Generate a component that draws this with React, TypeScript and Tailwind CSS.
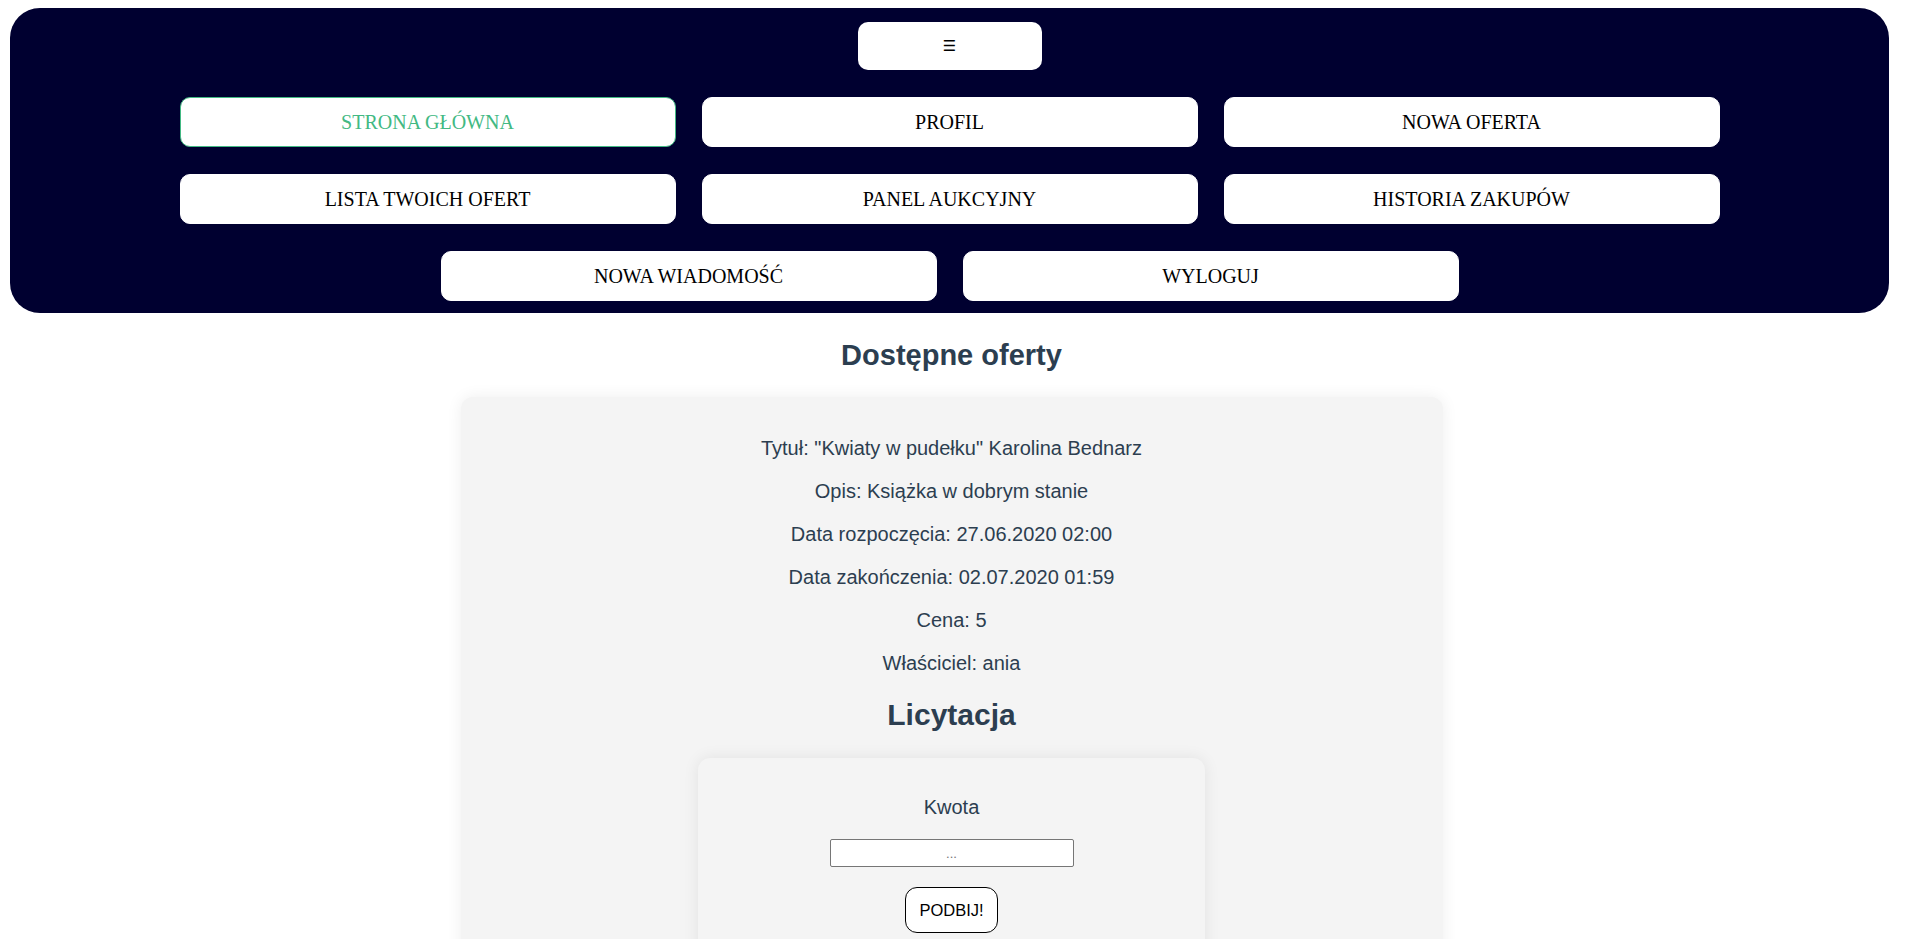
import React, { useState } from 'react';

const navLinks = [
  'STRONA GŁÓWNA',
  'PROFIL',
  'NOWA OFERTA',
  'LISTA TWOICH OFERT',
  'PANEL AUKCYJNY',
  'HISTORIA ZAKUPÓW',
  'NOWA WIADOMOŚĆ',
  'WYLOGUJ',
];

const offer = {
  title: '"Kwiaty w pudełku" Karolina Bednarz',
  description: 'Książka w dobrym stanie',
  start: '27.06.2020 02:00',
  end: '02.07.2020 01:59',
  price: 5,
  owner: 'ania',
};

const App = () => {
  const [active] = useState('STRONA GŁÓWNA');
  const [amount, setAmount] = useState('');

  return (
    <div className="w-[1903px] min-h-screen bg-white text-center text-[#2c3e50] font-['Liberation_Sans',Arial,sans-serif]">
      <nav className="ml-[10px] mr-[14px] mt-[8px] rounded-[30px] bg-[#000030] pt-[14px] pb-[12px] flex flex-col items-center">
        <button className="w-[184px] h-[48px] rounded-[10px] bg-white text-[15px] text-black font-['DejaVu_Sans',sans-serif] mb-[27px]">
          ☰
        </button>
        <div className="flex flex-wrap justify-center gap-x-[26px] gap-y-[27px] w-[1540px]">
          {navLinks.map((link) => (
            <a
              key={link}
              href="#"
              className={
                link === active
                  ? "w-[496px] h-[50px] rounded-[10px] bg-white border border-[#42b983] text-[#42b983] flex items-center justify-center text-[20px] font-['Liberation_Serif',serif]"
                  : "w-[496px] h-[50px] rounded-[10px] bg-white border border-white text-black flex items-center justify-center text-[20px] font-['Liberation_Serif',serif]"
              }
            >
              {link}
            </a>
          ))}
        </div>
      </nav>

      <h1 className="mt-[25px] text-[29px] leading-[34px] font-bold">Dostępne oferty</h1>

      <div className="mx-auto mt-[25px] mb-[40px] w-[982px] rounded-[12px] bg-[#f4f4f4] shadow-[0_0_16px_rgba(0,0,0,0.07)] pt-[40px] pb-[38px] flex flex-col items-center">
        <div className="flex flex-col gap-[20px] text-[20px] leading-[23px]">
          <p>Tytuł: {offer.title}</p>
          <p>Opis: {offer.description}</p>
          <p>Data rozpoczęcia: {offer.start}</p>
          <p>Data zakończenia: {offer.end}</p>
          <p>Cena: {offer.price}</p>
          <p>Właściciel: {offer.owner}</p>
        </div>

        <h2 className="mt-[23px] text-[30px] leading-[34px] font-bold">Licytacja</h2>

        <div className="mt-[26px] w-[507px] rounded-[12px] bg-[#f4f4f4] shadow-[0_0_16px_rgba(0,0,0,0.08)] pt-[38px] pb-[38px] flex flex-col items-center">
          <label className="text-[20px] leading-[23px]">Kwota</label>
          <input
            value={amount}
            onChange={(e) => setAmount(e.target.value)}
            placeholder="..."
            className="mt-[20px] w-[244px] h-[28px] bg-white border border-[#767676] rounded-[2px] text-center text-[13px] text-black placeholder:text-[#757575] outline-none"
          />
          <button className="mt-[20px] w-[93px] h-[46px] rounded-[12px] border border-black bg-white text-[16.5px] text-black">
            PODBIJ!
          </button>
        </div>
      </div>
    </div>
  );
};

export default App;
